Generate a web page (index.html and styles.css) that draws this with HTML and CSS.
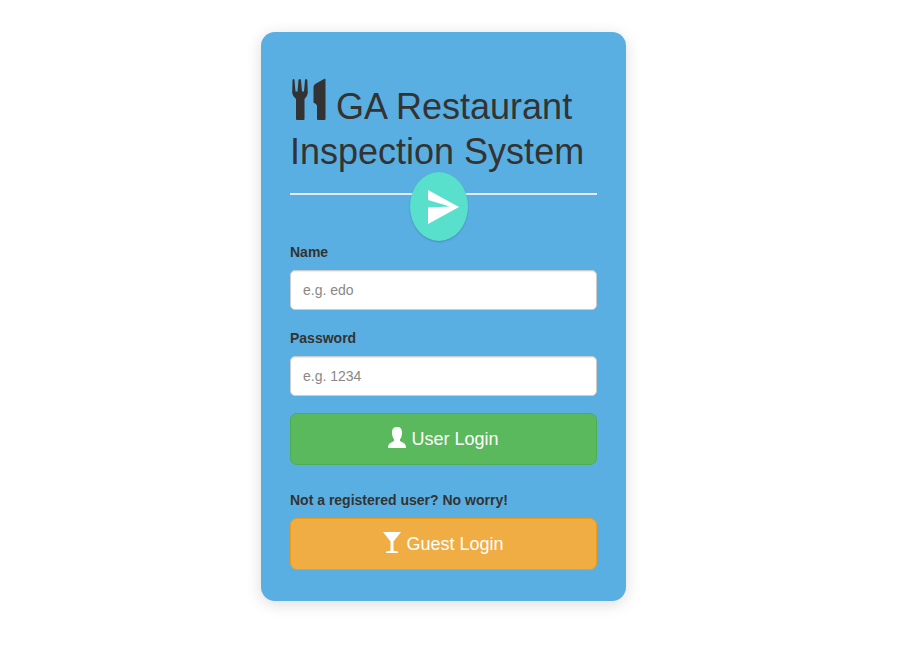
FILE: index.html
```html
<!DOCTYPE html>
<html lang="en">
<head>
<meta charset="utf-8">
<meta name="viewport" content="width=device-width, initial-scale=1">
<title>GA Restaurant Inspection System</title>
<link rel="stylesheet" href="styles.css">
</head>
<body>
<main class="panel">
  <header class="panel-header">
    <h1 class="title"><svg class="title-icon" viewBox="0 0 34 43" aria-hidden="true"><path d="M.5 2Q1.500 0 2.500 2L3.500 13.500H5.500L6.500 2Q8 0 9 2L10 13.500H12L13 2Q14 0 15.300 2L15.800 15Q15.500 18 12.500 21V41Q12.500 42 11.500 42H5Q4 42 4 41V21Q.5 18 .2 15ZM33.500 2V41Q33.500 42 32.500 42H26Q25 42 25 41V27.500Q24.500 26 21.500 24.500V9Q21.500 6.500 24 5.500L32 1Q33.500 .4 33.500 2Z"/></svg> GA Restaurant Inspection System</h1>
    <button class="send" type="button" aria-label="Send"><svg class="send-icon" viewBox="0 0 31 34" aria-hidden="true"><path d="M0 0L31 17L0 34V17.500L22 16.500L0 10Z"/></svg></button>
  </header>
  <form class="login">
    <label class="label" for="name">Name</label>
    <input class="field" id="name" type="text" placeholder="e.g. edo">
    <label class="label" for="password">Password</label>
    <input class="field" id="password" type="password" placeholder="e.g. 1234">
    <button class="btn btn-user" type="button"><svg class="btn-icon" viewBox="0 0 18 21" aria-hidden="true"><path d="M9 0C12.500 0 14 2 14 5.500C14 9 13 11 12 12.500V14L16.500 16.500Q18 17.500 18 21H0Q0 17.500 1.500 16.500L6 14V12.500C5 11 4 9 4 5.500C4 2 5.500 0 9 0Z"/></svg> User Login</button>
    <p class="label guest-note">Not a registered user? No worry!</p>
    <button class="btn btn-guest" type="button"><svg class="btn-icon" viewBox="0 0 18 21" aria-hidden="true"><path d="M0 0H18L10.500 9.500V18.800L15 19.500V21H3V19.500L7.500 18.800V9.500Z"/></svg> Guest Login</button>
  </form>
</main>
</body>
</html>
```
FILE: styles.css
```css
* { box-sizing: border-box; }

body {
  margin: 0;
  padding: 32px 13px 32px 0;
  background: #fff;
  color: #333;
  font-family: "Liberation Sans", Arial, sans-serif;
  font-size: 14px;
}

.panel {
  max-width: 365px;
  margin: 0 auto;
  padding: 46px 29px 31px;
  border-radius: 14px;
  background: #5aafe2;
  box-shadow: 0 3px 16px rgba(0, 0, 0, 0.14);
}

.panel-header {
  position: relative;
  padding-bottom: 19px;
  border-bottom: 2px solid #e4eaf0;
}

.title {
  margin: 0;
  font-size: 36px;
  font-weight: 400;
  line-height: 45px;
}

.title-icon {
  width: 34px;
  height: 43px;
  margin-left: 2px;
  vertical-align: -2px;
  fill: currentColor;
}

.send {
  position: absolute;
  top: 94px;
  left: 120px;
  display: flex;
  align-items: center;
  justify-content: center;
  width: 58px;
  height: 69px;
  padding: 0 0 0 8px;
  border: 0;
  border-radius: 50%;
  background: #58e0cc;
  box-shadow: 0 1px 2px rgba(0, 0, 0, 0.2);
}

.send-icon {
  width: 31px;
  height: 34px;
  fill: #fff;
}

.login { padding-top: 46px; }

.label {
  display: block;
  margin: 0 0 7px;
  font-size: 14px;
  font-weight: 700;
  line-height: 22px;
}

.field {
  display: block;
  width: 100%;
  height: 40px;
  margin: 0 0 17px;
  padding: 0 12px;
  border: 1px solid #ccc;
  border-radius: 5px;
  background: #fff;
  box-shadow: inset 0 1px 1px rgba(0, 0, 0, 0.08);
  color: #555;
  font-family: inherit;
  font-size: 14px;
}

.field::placeholder { color: #888; opacity: 1; }

.btn {
  display: flex;
  align-items: center;
  justify-content: center;
  gap: 5px;
  width: 100%;
  height: 52px;
  padding: 0;
  border: 1px solid;
  border-radius: 7px;
  color: #fff;
  font-family: inherit;
  font-size: 18px;
}

.btn-icon {
  width: 18px;
  height: 21px;
  margin-bottom: 3px;
  fill: currentColor;
}

.btn-user { background: #5ab95c; border-color: #4cae4c; }

.btn-guest { background: #f0ad44; border-color: #f39c12; }

.guest-note { margin-top: 24px; }
```
